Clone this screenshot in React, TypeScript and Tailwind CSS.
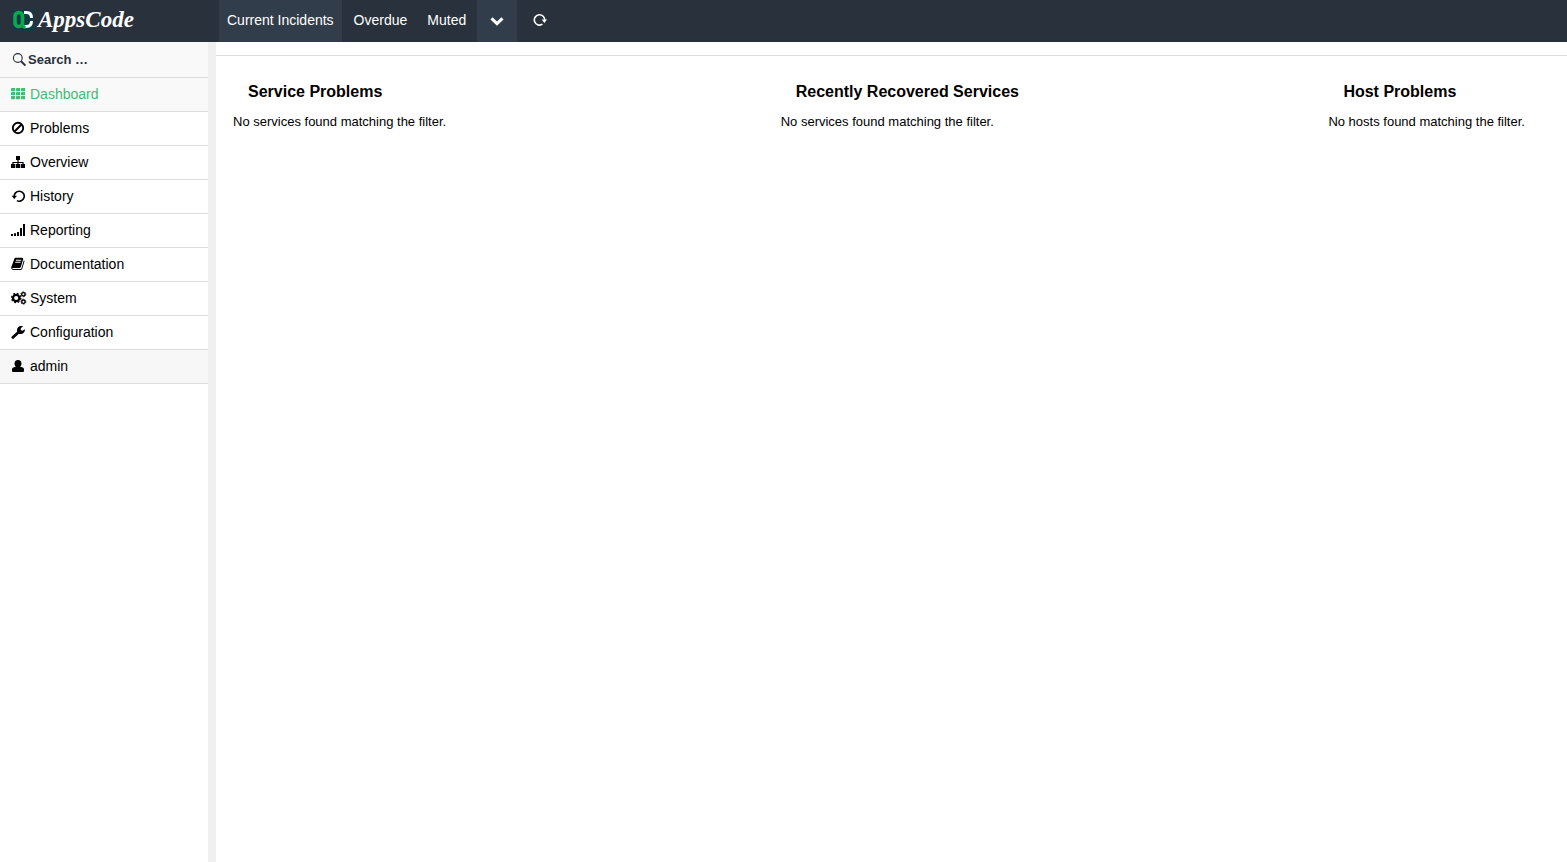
import type { ReactNode } from 'react';

const svg = (children: ReactNode, viewBox = '0 0 14 14') => (
  <svg viewBox={viewBox} className="size-3.5" fill="currentColor" aria-hidden="true">
    {children}
  </svg>
);

const grid = svg(
  [1, 5, 9].flatMap((y) =>
    [0, 5, 10].map((x) => <rect key={`${x}-${y}`} x={x} y={y} width="4.2" height="3.2" rx="0.4" />),
  ),
);

const block = svg(
  <g fill="none" stroke="currentColor" strokeWidth="1.9">
    <circle cx="7" cy="7" r="5.2" />
    <path d="M3.5 10.5 10.5 3.5" />
  </g>,
);

const sitemap = svg(
  <>
    <path d="M5 1h4v4H5zM0 9h4.200v4H0zM4.900 9h4.200v4H4.900zM9.800 9H14v4H9.800z" />
    <path d="M7 4v6M2 10V7.500h10V10" fill="none" stroke="currentColor" strokeWidth="1.200" />
  </>,
);

const history = svg(
  <>
    <path d="M3.300 8a5 5 0 1 1 2.600 3.600" fill="none" stroke="currentColor" strokeWidth="1.6" />
    <path d="M0.600 6.700h5.400L3.300 10z" />
  </>,
);

const signal = svg(
  <path d="M0 11h2v2H0zM3 10.300h2V13H3zM6 9h2v4H6zM9 5h2v8H9zM12 1h2.300v12H12z" />,
);

const book = svg(
  <path d="M1639 478q40 57 18 129l-275 906q-19 64-76.5 107.5t-122.5 43.5h-923q-77 0-148.5-53.5t-99.5-131.5q-24-67-2-127 0-4 3-27t4-37q1-8-3-21.5t-3-19.5q2-11 8-21t16.5-23.5 16.5-23.5q23-38 45-91.5t30-91.5q3-10 .5-30t-.5-28q3-11 17-28t17-23q21-36 42-92t25-90q1-9-2.5-32t.5-28q4-13 22-30.5t22-22.5q19-26 42.5-84.5t27.5-96.5q1-8-3-25.5t-2-26.5q2-8 9-18t18-23 17-21q8-12 16.5-30.5t15-35 16-36 19.5-32 26.5-23.5 36-11.5 47.5 5.5l-1 3q38-9 51-9h761q74 0 114 56t18 130l-274 906q-36 119-71.5 153.5t-128.5 34.5h-869q-27 0-38 15-11 16-1 43 24 70 144 70h923q29 0 56-15.5t35-41.5l300-987q7-22 5-57 38 15 59 43zm-1064 2q-4 13 2 22.5t20 9.5h608q13 0 25.5-9.5t16.5-22.5l21-64q4-13-2-22.5t-20-9.5h-608q-13 0-25.5 9.5t-16.5 22.5zm-83 256q-4 13 2 22.5t20 9.5h608q13 0 25.5-9.5t16.5-22.5l21-64q4-13-2-22.5t-20-9.5h-608q-13 0-25.5 9.5t-16.5 22.5z" />,
  '-30 40 1760 1760',
);

const user = svg(
  <path d="M7 1c2.300 0 3.500 1.500 3.500 3.600 0 1.300-.5 2.400-1.300 3.100l2.500.9c.8.300 1.300 1 1.300 1.800v1.300c0 .8-.500 1.300-1.300 1.300H2.300C1.500 13 1 12.500 1 11.700v-1.300c0-.8.5-1.500 1.300-1.800l2.500-.9C4 7 3.500 5.900 3.500 4.600 3.500 2.500 4.700 1 7 1z" />,
);

const wrench = svg(
  <path d="M.8 11.500 6.100 6.700C5.300 4 7.100 1 10.200 1c.9 0 1.700.2 2.200.5L9.800 3v1.900l1.600.9 2.500-1.500c.3 3-2 5-4.600 4.700-.6 0-1-.2-1.400-.3L3 13.300a1.400 1.400 0 0 1-2.200-1.800z" />,
);

const gears = (
  <svg viewBox="0 0 16 14" className="h-3.5 w-4" fill="none" stroke="currentColor" aria-hidden="true">
    <circle cx="5.200" cy="7" r="3.200" strokeWidth="2.200" />
    <circle cx="5.200" cy="7" r="4.600" strokeWidth="1.400" strokeDasharray="1.810 1.810" />
    <circle cx="12.400" cy="3.300" r="1.700" strokeWidth="1.400" />
    <circle cx="12.400" cy="3.300" r="2.500" strokeWidth="0.900" strokeDasharray="1.310 1.310" />
    <circle cx="12.400" cy="10.700" r="1.700" strokeWidth="1.400" />
    <circle cx="12.400" cy="10.700" r="2.500" strokeWidth="0.900" strokeDasharray="1.310 1.310" />
  </svg>
);

const menu = [
  { label: 'Dashboard', icon: grid, tone: 'bg-[#f9f9f9] text-[#44bb77]' },
  { label: 'Problems', icon: block, tone: '' },
  { label: 'Overview', icon: sitemap, tone: '' },
  { label: 'History', icon: history, tone: '' },
  { label: 'Reporting', icon: signal, tone: '' },
  { label: 'Documentation', icon: book, tone: '' },
  { label: 'System', icon: gears, tone: '' },
  { label: 'Configuration', icon: wrench, tone: '' },
  { label: 'admin', icon: user, tone: 'bg-[#f7f7f7]' },
];

const tabs = [
  { label: 'Current Incidents', tone: 'bg-[#323d4b]' },
  { label: 'Overdue', tone: '' },
  { label: 'Muted', tone: '' },
];

const panels = [
  { title: 'Service Problems', text: 'No services found matching the filter.' },
  { title: 'Recently Recovered Services', text: 'No services found matching the filter.' },
  { title: 'Host Problems', text: 'No hosts found matching the filter.' },
];

function Logo() {
  return (
    <a href="#" className="flex items-center gap-1 text-white">
      <svg viewBox="0 0 22 22" className="size-[22px]" fill="none" aria-hidden="true">
        <rect width="22" height="22" fill="#143b45" />
        <path d="M12 3.500h2.500q5 0 5 5.500M12 17.500h2.500q5 0 5-5.500" stroke="#fff" strokeWidth="3" />
        <rect x="3" y="3.500" width="7.500" height="14" rx="3.700" stroke="#0ba84c" strokeWidth="3.600" />
        <path d="M10.500 12v3q0 3 3 3.500" stroke="#0ba84c" strokeWidth="3" />
      </svg>
      <span className="font-['Liberation_Serif',serif] text-[23px] leading-8 font-bold italic">AppsCode</span>
    </a>
  );
}

export default function App() {
  return (
    <div className="flex min-h-screen flex-col bg-white font-['Liberation_Sans',Arial,sans-serif] text-sm text-black">
      <header className="flex h-[42px] bg-[#28313c] text-white">
        <div className="w-[219px] shrink-0 pt-1 pl-3">
          <Logo />
        </div>
        <div className="flex gap-[3px]">
          <nav className="flex gap-1">
            {tabs.map((tab) => (
              <a key={tab.label} href="#" className={`px-2 pt-2.5 leading-5 whitespace-nowrap ${tab.tone}`}>
                {tab.label}
              </a>
            ))}
          </nav>
          <button type="button" aria-label="More dashboards" className="flex w-10 items-center justify-center bg-[#323d4b]">
            <svg viewBox="0 0 14 14" className="size-3.5" fill="none" stroke="currentColor" aria-hidden="true">
              <path d="M1.500 4.300 7 9.600l5.500-5.300" strokeWidth="3" />
            </svg>
          </button>
        </div>
        <button type="button" aria-label="Refresh" className="ml-4 flex items-center pb-0.5">
          <svg viewBox="0 0 14 14" className="size-3.5" aria-hidden="true">
            <path d="M9.500 11.200A5.200 5.200 0 1 1 11.700 7.500" fill="none" stroke="currentColor" strokeWidth="1.600" />
            <path d="M8.600 6.500H14L11.400 9.900z" fill="currentColor" />
          </svg>
        </button>
      </header>

      <div className="flex flex-1">
        <aside className="w-[216px] shrink-0 border-r-8 border-[#f0f0f0]">
          <label className="flex h-9 items-center gap-0.5 border-b border-[#dddddd] bg-[#f9f9f9] pl-3 text-[#28313c]">
            <svg viewBox="0 0 14 14" className="size-3.5 shrink-0" fill="none" stroke="currentColor" aria-hidden="true">
              <circle cx="5.800" cy="5" r="4.400" strokeWidth="1.100" />
              <path d="M9 8.200l4.400 4.300" strokeWidth="1.900" />
            </svg>
            <input
              type="text"
              aria-label="Search"
              placeholder="Search …"
              className="w-full bg-transparent pt-0.5 text-[13px] font-bold outline-none placeholder:text-[#28313c]"
            />
          </label>
          <nav>
            {menu.map((item) => (
              <a
                key={item.label}
                href="#"
                className={`flex h-[34px] items-center border-b border-[#dddddd] pb-px pl-[11px] ${item.tone}`}
              >
                <span className="flex w-[19px] shrink-0">{item.icon}</span>
                {item.label}
              </a>
            ))}
          </nav>
        </aside>

        <main className="min-w-0 flex-1">
          <div className="h-3.5 border-b border-[#dddddd]" />
          <div className="grid grid-cols-[40.54%_40.54%_1fr] pt-6">
            {panels.map((panel) => (
              <section key={panel.title} className="pl-[17px] whitespace-nowrap">
                <h2 className="pl-[15px] text-base leading-6 font-bold">{panel.title}</h2>
                <p className="pt-2 text-[13px] leading-5">{panel.text}</p>
              </section>
            ))}
          </div>
        </main>
      </div>
    </div>
  );
}
